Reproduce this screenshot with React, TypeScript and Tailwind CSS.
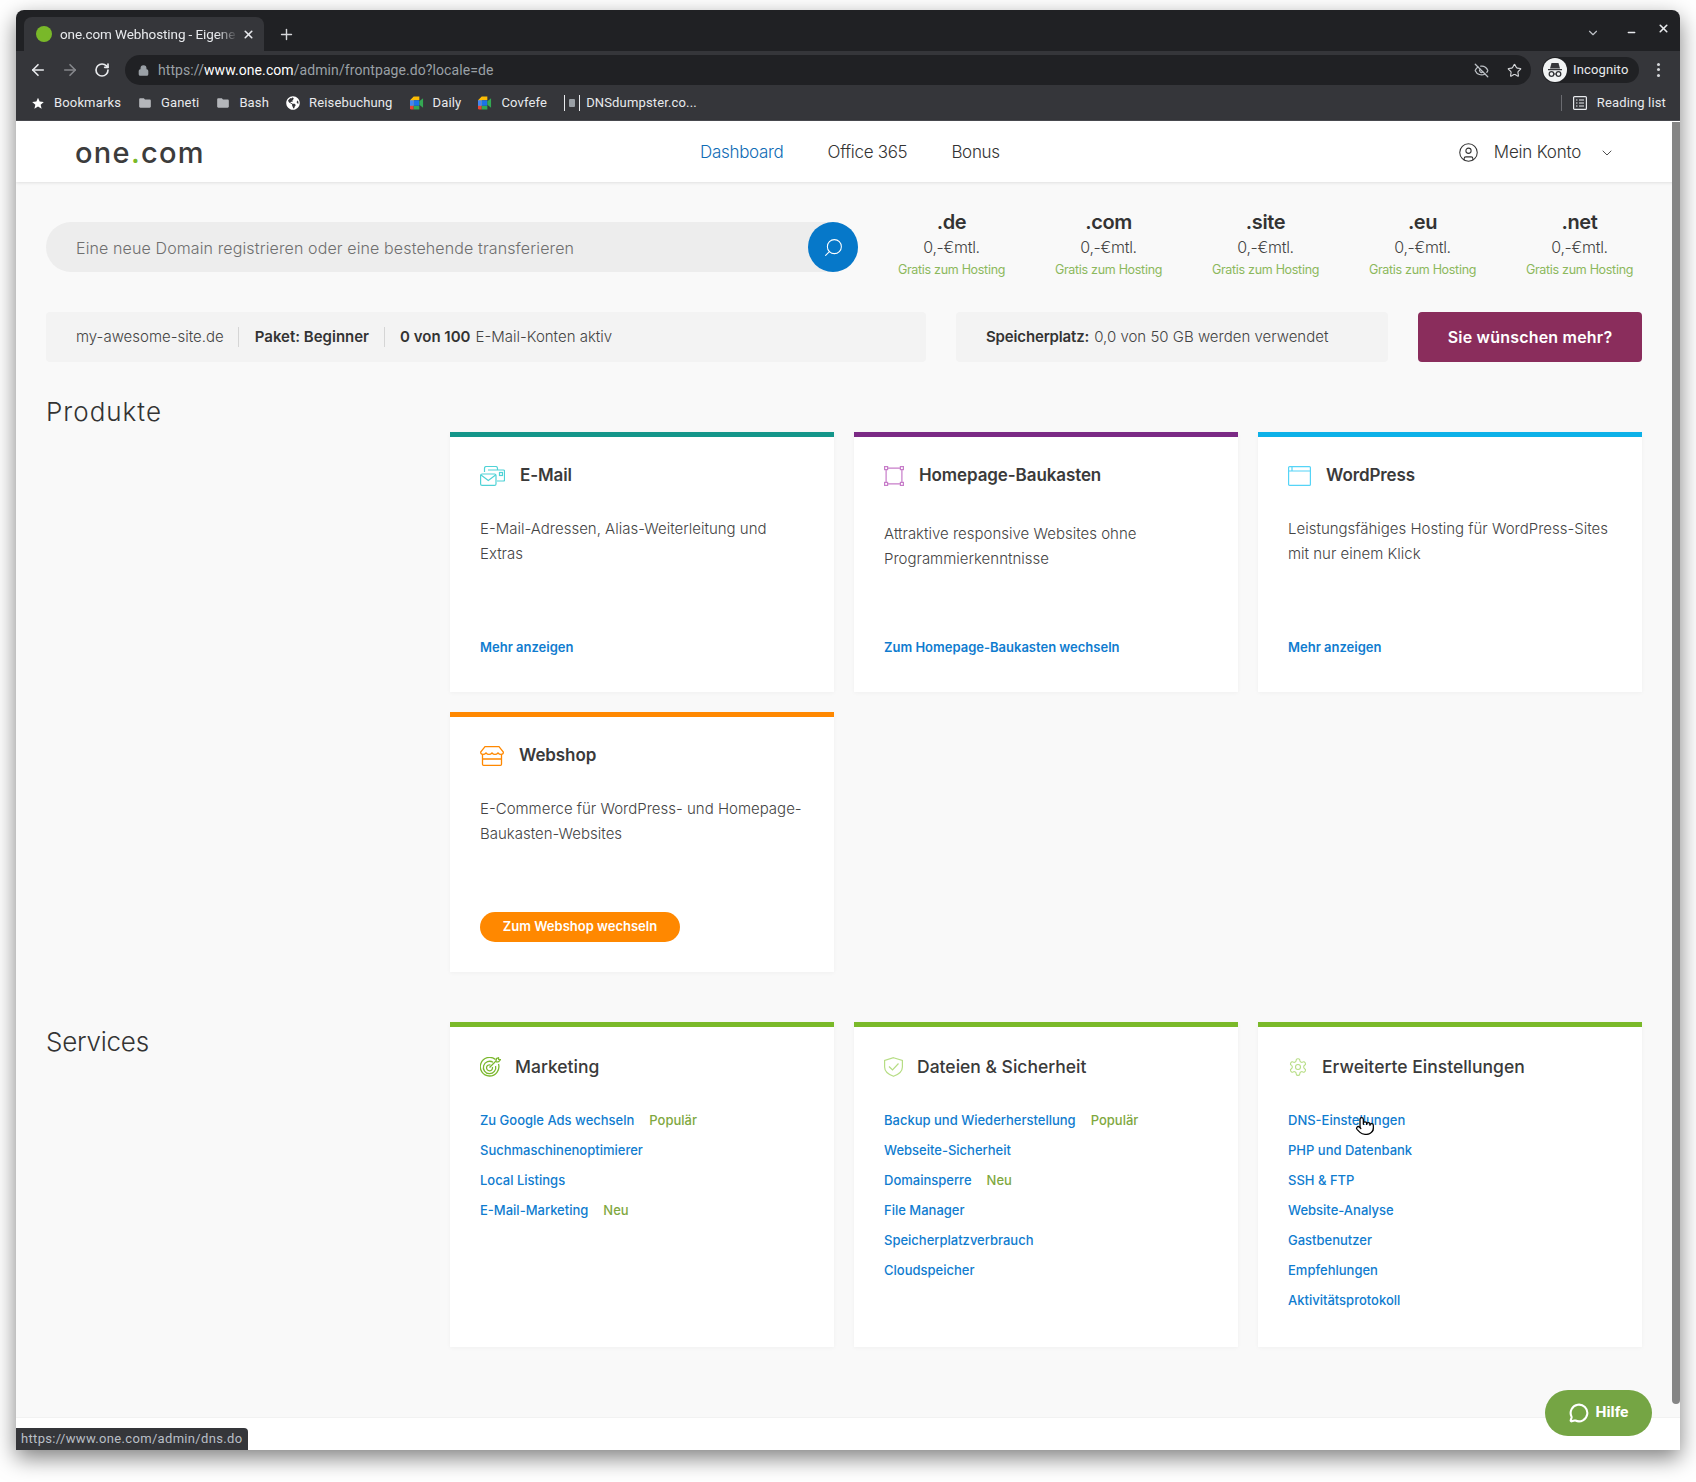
import { ArrowLeft, ArrowRight, RotateCw, Lock, Star, EyeOff, CircleUser, ChevronDown, Search, MessageCircle, Pointer, Plus, X, Minus } from "lucide-react";
import { MdFolder, MdStar } from "react-icons/md";
import { FaGlobeAmericas } from "react-icons/fa";
import type { ReactNode } from "react";

function MeetIcon() {
  return (
    <svg width="15" height="14" viewBox="0 0 15 14">
      <path d="M0 4 4 0h6v4H4v6H0z" fill="#fbbc04" />
      <path d="M0 10h4v4H1.500Q0 14 0 12.500z" fill="#ea4335" />
      <path d="M4 10h6v4H4z" fill="#34a853" />
      <path d="M4 4h6v6H4z" fill="#1a73e8" />
      <path d="M10 5l4-3v10l-4-3z" fill="#34a853" />
      <path d="M0 4h4v6H0z" fill="#4285f4" />
    </svg>
  );
}

function IncognitoIcon() {
  return (
    <svg width="24" height="24" viewBox="0 0 24 24">
      <circle cx="12" cy="12" r="12" fill="#f1f3f4" />
      <path d="M8.500 5h7l1.500 5.500H7z" fill="#35363a" />
      <path d="M5 11h14v1.200H5z" fill="#35363a" />
      <circle cx="8.500" cy="16" r="2.300" fill="none" stroke="#35363a" strokeWidth="1.300" />
      <circle cx="15.500" cy="16" r="2.300" fill="none" stroke="#35363a" strokeWidth="1.300" />
      <path d="M10.800 16h2.400" stroke="#35363a" strokeWidth="1.200" />
    </svg>
  );
}

function MailIcon() {
  return (
    <svg width="25" height="20" viewBox="0 0 25 20" fill="none" stroke="#4fd2d6" strokeWidth="1.200">
      <path d="M4.500 6V2.500q0-2 2-2h9q2 0 2 2V4" />
      <path d="M8 4h15.500q1 0 1 1v9q0 1-1 1H17" />
      <rect x="0.600" y="8" width="15.400" height="11.400" rx="1.500" />
      <path d="M1 9l7.300 5.500L15.600 9" />
      <rect x="19.500" y="6.500" width="3" height="3" />
    </svg>
  );
}

function BuilderIcon() {
  return (
    <svg width="20" height="20" viewBox="0 0 20 20" fill="none" stroke="#c77dc9" strokeWidth="1.200">
      <rect x="0.600" y="0.600" width="3" height="3" />
      <rect x="16.400" y="0.600" width="3" height="3" />
      <rect x="0.600" y="16.400" width="3" height="3" />
      <rect x="16.400" y="16.400" width="3" height="3" />
      <path d="M3.600 2.100h12.800M3.600 17.900h12.800M2.100 3.600v12.800M17.900 3.600v12.800" />
    </svg>
  );
}

function BrowserIcon() {
  return (
    <svg width="23" height="20" viewBox="0 0 23 20" fill="none" stroke="#55d4f7" strokeWidth="1.200">
      <rect x="0.600" y="0.600" width="21.800" height="18.800" rx="1" />
      <path d="M0.600 5h21.800M4 0.600V5" />
    </svg>
  );
}

function ShopIcon() {
  return (
    <svg width="24" height="20" viewBox="0 0 24 20" fill="none" stroke="#ff8800" strokeWidth="1.300">
      <path d="M5 0.700h14l4.300 5.300q.3 2.400-2.300 2.400-1.800 0-3-1.400-1.200 1.400-3 1.400t-3-1.400q-1.200 1.400-3 1.400t-3-1.400q-1.200 1.400-3 1.400Q.5 8.400.7 6z" />
      <path d="M2.500 8.400v9.900q0 1 1 1h17q1 0 1-1V8.400M2.500 13h19" />
    </svg>
  );
}

function TargetIcon() {
  return (
    <svg width="21" height="20" viewBox="0 0 21 20" fill="none" stroke="#7cb82f" strokeWidth="1.300">
      <path d="M15.500 2.500A9.300 9.300 0 1 0 18.500 7" />
      <path d="M13 5.300A6.200 6.200 0 1 0 15.600 9" />
      <path d="M10.500 8A3 3 0 1 0 12.400 10" />
      <path d="M9.500 10.500 16 4l.5-2.500L18.500.8l.2 1.700 1.800.2-1.800 2-2.500.3" />
    </svg>
  );
}

function ShieldIcon() {
  return (
    <svg width="19" height="20" viewBox="0 0 19 20" fill="none" stroke="#b6dd84" strokeWidth="1.200">
      <path d="M9.500.7 18.400 3.500v6.500q0 6-8.900 9.300Q.600 16 .600 10V3.500z" />
      <path d="M5 9.500 8.500 13 14.500 6.500" />
    </svg>
  );
}

function GearIcon() {
  return (
    <svg width="20" height="20" viewBox="0 0 24 24" fill="none" stroke="#b6dd84" strokeWidth="1.300">
      <path d="M12.220 2h-.44a2 2 0 0 0-2 2v.18a2 2 0 0 1-1 1.730l-.43.250a2 2 0 0 1-2 0l-.15-.08a2 2 0 0 0-2.730.73l-.220.380a2 2 0 0 0 .73 2.730l.15.100a2 2 0 0 1 1 1.720v.510a2 2 0 0 1-1 1.740l-.15.090a2 2 0 0 0-.73 2.730l.220.380a2 2 0 0 0 2.730.73l.15-.08a2 2 0 0 1 2 0l.43.250a2 2 0 0 1 1 1.730V20a2 2 0 0 0 2 2h.44a2 2 0 0 0 2-2v-.18a2 2 0 0 1 1-1.730l.43-.250a2 2 0 0 1 2 0l.15.080a2 2 0 0 0 2.730-.730l.220-.390a2 2 0 0 0-.730-2.730l-.150-.080a2 2 0 0 1-1-1.740v-.500a2 2 0 0 1 1-1.740l.150-.090a2 2 0 0 0 .730-2.730l-.220-.380a2 2 0 0 0-2.730-.730l-.150.080a2 2 0 0 1-2 0l-.43-.250a2 2 0 0 1-1-1.730V4a2 2 0 0 0-2-2z" />
      <circle cx="12" cy="12" r="3" />
    </svg>
  );
}

function Bookmark(props: { icon: ReactNode; label: string }) {
  return (
    <div className="flex items-center gap-[9px]">
      <span className="flex w-[14px] justify-center">{props.icon}</span>
      <span>{props.label}</span>
    </div>
  );
}

function TldPrice(props: { tld: string }) {
  return (
    <div className="flex flex-col items-center">
      <div className="text-[20px] leading-[28px] font-semibold tracking-[-0.4px] text-[#333]">{props.tld}</div>
      <div className="text-[16px] leading-[22px] font-light tracking-[-0.3px] text-[#444]">0,-€mtl.</div>
      <div className="mt-[2px] text-[12.500px] leading-[20px] tracking-[-0.3px] text-[#8cb85c]">Gratis zum Hosting</div>
    </div>
  );
}

function ProductCard(props: {
  color: string;
  icon: ReactNode;
  title: string;
  desc: string;
  descTop?: string;
  children: ReactNode;
}) {
  return (
    <div className={`flex flex-col bg-white px-[30px] shadow-[0_1px_4px_rgba(0,0,0,0.04)] border-t-[5px] ${props.color}`}>
      <div className="mt-[29px] flex h-[20px] items-center gap-[15px]">
        {props.icon}
        <h3 className="text-[17px] font-semibold tracking-[-0.1px] text-[#3a3a3a]">{props.title}</h3>
      </div>
      <p className={`${props.descTop ?? "mt-[30px]"} text-[15px] leading-[25px] font-light text-[#444]`}>{props.desc}</p>
      <div className="mt-auto mb-[30px] flex h-[30px] items-center">{props.children}</div>
    </div>
  );
}

function TextLink(props: { label: string }) {
  return <a className="text-[13px] leading-[20px] font-semibold text-[#0f7ccf]">{props.label}</a>;
}

function ServiceCard(props: {
  icon: ReactNode;
  title: string;
  links: { label: string; tag?: string }[];
}) {
  return (
    <div className="border-t-[5px] border-[#7ab929] bg-white px-[30px] pb-[31px] shadow-[0_1px_4px_rgba(0,0,0,0.04)]">
      <div className="mt-[30px] flex h-[20px] items-center gap-[14px]">
        {props.icon}
        <h3 className="text-[17.500px] font-medium text-[#3a3a3a]">{props.title}</h3>
      </div>
      <ul className="mt-[29px]">
        {props.links.map((l) => (
          <li key={l.label} className="flex h-[30px] items-center gap-[15px] text-[13px] font-medium">
            <a className="text-[#0f7ccf]">{l.label}</a>
            {l.tag ? <span className="text-[#7fa83f]">{l.tag}</span> : null}
          </li>
        ))}
      </ul>
    </div>
  );
}

export default function App() {
  return (
    <div className="h-[1482px] w-[1696px] overflow-hidden bg-white pt-[10px] pl-[16px] [font-family:Inter,sans-serif]">
      <div className="relative flex h-[1440px] w-[1664px] flex-col overflow-hidden rounded-t-[8px] shadow-[0_8px_22px_rgba(0,0,0,0.5)]">
        {/* browser chrome */}
        <div className="[font-family:Roboto,sans-serif]">
          <div className="flex h-[41px] items-end bg-[#202124] pl-[8px] text-white">
            <div className="flex h-[34px] w-[240px] items-center rounded-t-[8px] bg-[#35363a] pl-[12px] pr-[9px]">
              <span className="h-[16px] w-[16px] shrink-0 rounded-full bg-[#79b829]" />
              <span className="ml-[8px] w-[178px] text-[13.500px] tracking-[-0.1px] whitespace-nowrap text-[#e8eaed] [mask-image:linear-gradient(to_right,black_88%,transparent)]">
                one.com Webhosting - Eigene
              </span>
              <X size={13} strokeWidth={3} className="ml-auto text-[#e8eaed]" />
            </div>
            <Plus size={17} strokeWidth={2} className="mb-[8px] ml-[14px] text-[#d5d7da]" />
            <div className="mb-[8px] ml-auto flex items-center pr-[10px]">
              <ChevronDown size={14} className="text-[#bdc1c6]" />
              <Minus size={11} strokeWidth={3} className="ml-[26px] text-[#e8eaed]" />
              <X size={13} strokeWidth={3} className="mb-[8px] ml-[20px] text-[#e8eaed]" />
            </div>
          </div>
          <div className="flex h-[37px] items-center bg-[#35363a] pl-[13px]">
            <ArrowLeft size={18} strokeWidth={2.200} className="text-[#e8eaed]" />
            <ArrowRight size={18} strokeWidth={2.200} className="ml-[14px] text-[#85878b]" />
            <RotateCw size={16} strokeWidth={2.500} className="ml-[15px] text-[#e8eaed]" />
            <div className="ml-[15px] flex h-[30px] w-[1406px] items-center rounded-full bg-[#202124] pl-[12px] pr-[9px] pt-px text-[14px] tracking-[0.08px]">
              <Lock size={11} strokeWidth={3} fill="currentColor" className="ml-[1px] text-[#9aa0a6]" />
              <span className="ml-[9px] text-[#9aa0a6]">
                https://<span className="text-white">www.one.com</span>/admin/frontpage.do?locale=de
              </span>
              <EyeOff size={15} strokeWidth={2} className="ml-auto text-[#bdc1c6]" />
              <Star size={15} strokeWidth={1.800} className="ml-[18px] text-[#d5d7da]" />
            </div>
            <div className="ml-[11px] flex h-[26px] w-[97px] items-center rounded-full bg-[#202124] pl-[1px] text-[13px] tracking-[0.15px] text-[#e8eaed]">
              <IncognitoIcon />
              <span className="ml-[6px]">Incognito</span>
            </div>
            <div className="ml-[18px] flex flex-col gap-[2.500px]">
              <span className="h-[3px] w-[3px] rounded-full bg-[#d5d7da]" />
              <span className="h-[3px] w-[3px] rounded-full bg-[#d5d7da]" />
              <span className="h-[3px] w-[3px] rounded-full bg-[#d5d7da]" />
            </div>
          </div>
          <div className="flex h-[33px] items-center gap-[17px] border-b border-[#4a4b50] bg-[#35363a] pl-[15px] pb-[2px] text-[13px] tracking-[0.15px] text-[#e8eaed]">
            <Bookmark icon={<MdStar size={15} className="text-white" />} label="Bookmarks" />
            <Bookmark icon={<MdFolder size={16} className="text-[#b4b6ba]" />} label="Ganeti" />
            <Bookmark icon={<MdFolder size={16} className="text-[#b4b6ba]" />} label="Bash" />
            <Bookmark icon={<FaGlobeAmericas size={14} className="text-white" />} label="Reisebuchung" />
            <Bookmark icon={<MeetIcon />} label="Daily" />
            <Bookmark icon={<MeetIcon />} label="Covfefe" />
            <div className="flex items-center gap-[6px]">
              <span className="flex h-[16px] w-[16px] items-center justify-center border-x border-[#e8eaed]">
                <span className="h-[8px] w-[6px] rounded-[1px] bg-[#9aa0a6]" />
              </span>
              <span>DNSdumpster.co...</span>
            </div>
            <div className="ml-auto mr-[14px] flex items-center">
              <span className="h-[16px] w-px bg-[#6a6b70]" />
              <svg width="14" height="14" viewBox="0 0 14 14" fill="none" stroke="#e8eaed" strokeWidth="1.200" className="ml-[11px]">
                <rect x="0.600" y="0.600" width="12.800" height="12.800" rx="1" />
                <path d="M3 4h1.500M6 4h5M3 7h1.500M6 7h5M3 10h1.500M6 10h5" />
              </svg>
              <span className="ml-[10px]">Reading list</span>
            </div>
          </div>
        </div>

        {/* site header */}
        <header className="z-10 flex h-[61px] shrink-0 items-center bg-white pt-[2px] pl-[59px] shadow-[0_1px_3px_rgba(0,0,0,0.1)]">
          <div className="w-[625px] text-[29px] leading-none font-medium tracking-[1.3px] text-[#3c3c3c]">
            one<span className="text-[#7ab929]">.</span>com
          </div>
          <nav className="flex items-center gap-[44px] text-[17px] font-light tracking-[-0.3px] text-[#333]">
            <a className="text-[#0f6cb5]">Dashboard</a>
            <a>Office 365</a>
            <a>Bonus</a>
          </nav>
          <div className="ml-[458px] flex items-center text-[17px] font-light tracking-[-0.2px] text-[#333]">
            <CircleUser size={21} strokeWidth={1.200} />
            <span className="ml-[15px]">Mein Konto</span>
            <ChevronDown size={16} strokeWidth={1.300} className="ml-[18px]" />
          </div>
        </header>

        {/* page */}
        <main className="flex-1 bg-[#f9f9f9] pt-[26px] pr-[38px] pl-[30px]">
          <div className="flex h-[72px]">
            <div className="mt-[14px] flex h-[50px] w-[812px] shrink-0 items-center justify-between rounded-full bg-[#ededed] pl-[30px]">
              <span className="pt-px text-[16px] font-light tracking-[0.12px] text-[#6f6f6f]">Eine neue Domain registrieren oder eine bestehende transferieren</span>
              <span className="flex h-[50px] w-[50px] items-center justify-center rounded-full bg-[#0678c9]">
                <Search size={21} strokeWidth={1.200} className="-scale-x-100 text-white" />
              </span>
            </div>
            <div className="ml-[15px] grid w-[785px] shrink-0 grid-cols-5">
              <TldPrice tld=".de" />
              <TldPrice tld=".com" />
              <TldPrice tld=".site" />
              <TldPrice tld=".eu" />
              <TldPrice tld=".net" />
            </div>
          </div>

          <div className="mt-[32px] flex h-[50px] gap-[30px] text-[15px] text-[#444]">
            <div className="flex w-[880px] items-center rounded-[4px] bg-[#f3f3f3] pl-[30px]">
              <span className="font-light">my-awesome-site.de</span>
              <span className="ml-[14px] mr-[16px] h-[20px] w-px bg-[#d5d5d5]" />
              <span className="font-semibold text-[#333]">Paket: Beginner</span>
              <span className="mx-[15px] h-[20px] w-px bg-[#d5d5d5]" />
              <span className="font-semibold text-[#333]">0 von 100</span>
              <span className="ml-[5px] font-light">E-Mail-Konten aktiv</span>
            </div>
            <div className="flex w-[432px] items-center rounded-[4px] bg-[#f3f3f3] pl-[30px]">
              <span className="font-semibold tracking-[-0.15px] text-[#333]">Speicherplatz:</span>
              <span className="ml-[5px] font-light">0,0 von 50 GB werden verwendet</span>
            </div>
            <a className="flex w-[224px] items-center justify-center rounded-[4px] bg-[#8a2d5c] pb-px text-[16px] font-semibold tracking-[0.2px] text-white">Sie wünschen mehr?</a>
          </div>

          <section className="mt-[32px] grid grid-cols-[404px_1fr]">
            <h2 className="text-[26px] leading-[36px] font-light tracking-[1px] text-[#333]">Produkte</h2>
            <div className="grid auto-rows-[260px] grid-cols-3 gap-[20px] pt-[38px]">
              <ProductCard color="border-[#14968a]" icon={<MailIcon />} title="E-Mail" desc="E-Mail-Adressen, Alias-Weiterleitung und Extras">
                <TextLink label="Mehr anzeigen" />
              </ProductCard>
              <ProductCard color="border-[#7b2a85]" icon={<BuilderIcon />} title="Homepage-Baukasten" desc="Attraktive responsive Websites ohne Programmierkenntnisse" descTop="mt-[35px]">
                <TextLink label="Zum Homepage-Baukasten wechseln" />
              </ProductCard>
              <ProductCard color="border-[#0db1e8]" icon={<BrowserIcon />} title="WordPress" desc="Leistungsfähiges Hosting für WordPress-Sites mit nur einem Klick">
                <TextLink label="Mehr anzeigen" />
              </ProductCard>
              <ProductCard color="border-[#ff8800]" icon={<ShopIcon />} title="Webshop" desc="E-Commerce für WordPress- und Homepage-Baukasten-Websites">
                <a className="flex h-[30px] w-[200px] items-center justify-center rounded-full bg-[#ff8800] text-[13px] font-semibold text-white">Zum Webshop wechseln</a>
              </ProductCard>
            </div>
          </section>

          <section className="mt-[50px] grid grid-cols-[404px_1fr]">
            <h2 className="pt-[2px] text-[26px] leading-[36px] font-light tracking-[-0.25px] text-[#333]">Services</h2>
            <div className="grid grid-cols-3 gap-[20px]">
              <ServiceCard
                icon={<TargetIcon />}
                title="Marketing"
                links={[
                  { label: "Zu Google Ads wechseln", tag: "Populär" },
                  { label: "Suchmaschinenoptimierer" },
                  { label: "Local Listings" },
                  { label: "E-Mail-Marketing", tag: "Neu" },
                ]}
              />
              <ServiceCard
                icon={<ShieldIcon />}
                title="Dateien & Sicherheit"
                links={[
                  { label: "Backup und Wiederherstellung", tag: "Populär" },
                  { label: "Webseite-Sicherheit" },
                  { label: "Domainsperre", tag: "Neu" },
                  { label: "File Manager" },
                  { label: "Speicherplatzverbrauch" },
                  { label: "Cloudspeicher" },
                ]}
              />
              <ServiceCard
                icon={<GearIcon />}
                title="Erweiterte Einstellungen"
                links={[
                  { label: "DNS-Einstellungen" },
                  { label: "PHP und Datenbank" },
                  { label: "SSH & FTP" },
                  { label: "Website-Analyse" },
                  { label: "Gastbenutzer" },
                  { label: "Empfehlungen" },
                  { label: "Aktivitätsprotokoll" },
                ]}
              />
            </div>
          </section>
        </main>
        <footer className="h-[33px] shrink-0 border-t border-[#f2f2f2] bg-white" />

        {/* things that float above the page */}
        <div className="absolute top-[112px] right-0 z-20 h-[1282px] w-[8px] rounded-b-[4px] bg-[#858585]" />
        <div className="absolute right-[28px] bottom-[14px] flex h-[46px] w-[107px] items-center justify-center gap-[7px] rounded-full bg-[#75a544] text-[15.500px] font-bold text-white [font-family:Roboto,sans-serif]">
          <MessageCircle size={20} strokeWidth={2.500} />
          Hilfe
        </div>
        <div className="absolute bottom-0 left-0 flex h-[22px] w-[232px] items-center rounded-tr-[4px] bg-[#35363a] pl-[5px] text-[13px] tracking-[0.33px] text-[#b9bfc6] [font-family:Roboto,sans-serif]">
          https://www.one.com/admin/dns.do
        </div>
        <Pointer size={20} strokeWidth={1.500} fill="white" className="absolute top-[1106px] left-[1339px] text-black" />
      </div>
    </div>
  );
}
